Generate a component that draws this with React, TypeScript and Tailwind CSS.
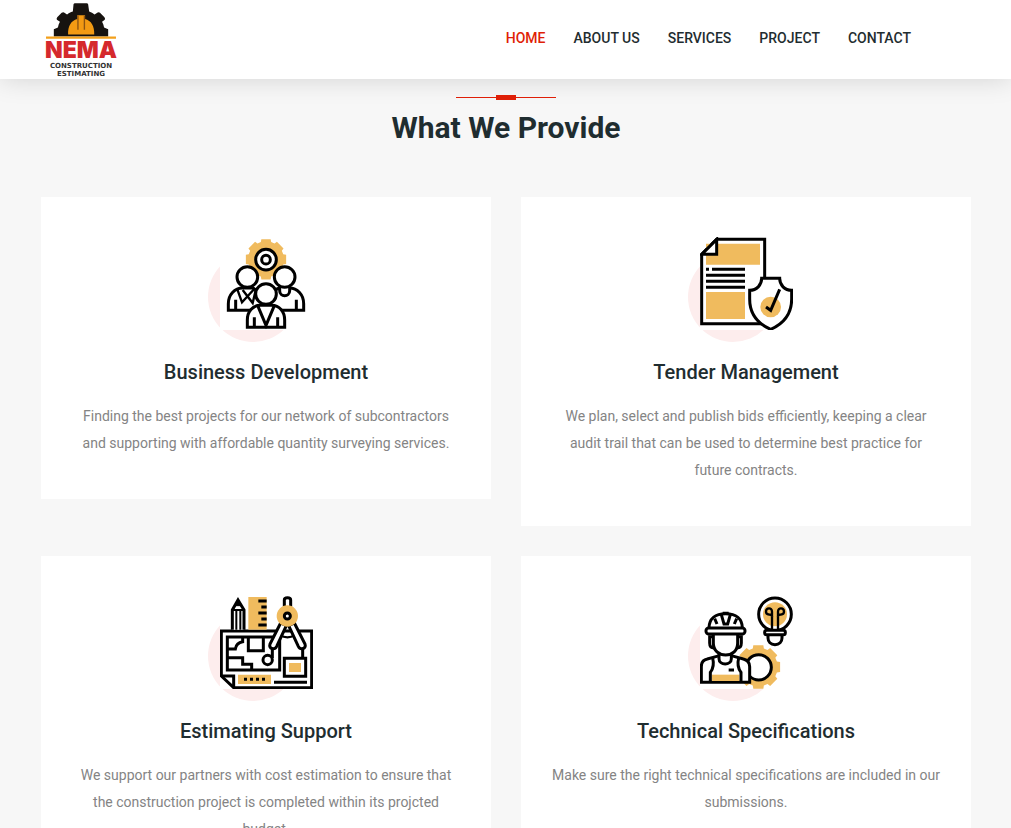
import type { ReactNode } from "react";

const GOLD = "#f0bb5e";

function gearPath(cx: number, cy: number, outer: number, inner: number, teeth: number) {
  const step = (Math.PI * 2) / teeth;
  const points: string[] = [];
  for (let i = 0; i < teeth; i++) {
    const a = i * step - Math.PI / 2;
    const corners: [number, number][] = [
      [inner, a - step * 0.37],
      [outer, a - step * 0.29],
      [outer, a + step * 0.29],
      [inner, a + step * 0.37],
    ];
    corners.forEach(([r, t]) => points.push(`${(cx + r * Math.cos(t)).toFixed(1)} ${(cy + r * Math.sin(t)).toFixed(1)}`));
  }
  return `M${points.join("L")}Z`;
}

function IconFrame({ viewBox = "60 21 279 279", children }: { viewBox?: string; children: ReactNode }) {
  return (
    <svg viewBox={viewBox} className="relative block size-full bg-white" fill="none" stroke="#000" strokeWidth="9" aria-hidden="true">
      {children}
    </svg>
  );
}

function TeamIcon() {
  return (
    <IconFrame>
      <path d={gearPath(198, 88, 62, 54, 8)} fill={GOLD} stroke="none" />
      <circle cx="198" cy="89" r="31" fill="#fff" />
      <circle cx="198" cy="89" r="13" />
      <path d="M85 241V221C85 194 104 174 128 174H158C178 182 190 200 190 241Z" fill="#fff" />
      <path d="M311 241V221C311 194 292 174 268 174H238C216 182 206 200 206 241Z" fill="#fff" />
      <path d="M107 241V209M289 241V209" />
      <path d="M112 178L126 217L162 178M128 180L158 219L167 181" strokeWidth="7" />
      <path d="M239 174V182C239 202 269 202 269 182V174" fill="#fff" />
      <circle cx="142" cy="141" r="31" fill="#fff" />
      <circle cx="254" cy="141" r="31" fill="#fff" />
      <path d="M142 292V270C142 245 158 226 181 226H215C238 226 254 245 254 270V292Z" fill="#fff" />
      <path d="M163 292V262M233 292V262M174 229L198 286L222 229" />
      <circle cx="198" cy="192" r="31" fill="#fff" />
    </IconFrame>
  );
}

function TenderIcon() {
  return (
    <IconFrame>
      <path d="M65 281V73L110 28H254V281Z" fill="#fff" />
      <path d="M78 41H240V104H78ZM78 186H195V267H78Z" fill={GOLD} stroke="none" />
      <path d="M65 73L110 28V73Z" fill="#fff" />
      <path d="M78 118H87M96 118H195M78 136H195M78 154H195M78 172H195" />
      <path d="M245 145H299C299 165 314 181 335 181V207C335 248 313 280 272 298C231 280 209 248 209 207V181C230 181 245 165 245 145Z" fill="#fff" />
      <circle cx="272" cy="231" r="31" fill={GOLD} stroke="none" />
      <path d="M258 231L272 241L299 178" />
    </IconFrame>
  );
}

function EstimatingIcon() {
  return (
    <IconFrame viewBox="60 19 279 279">
      <path d="M64 124H335V294H101L64 259Z" fill="#fff" />
      <path d="M97 120V61L114 31L132 61V120" fill="#fff" />
      <path d="M97 61H132M109 62V120M121 62V120" strokeWidth="6" />
      <path d="M105 48L114 31L123 48Z" fill="#000" strokeWidth="3" />
      <path d="M145 22H200V120H145Z" fill={GOLD} stroke="none" />
      <path d="M175 34H200M184 52H200M175 70H200M184 88H200M175 106H200" />
      <path d="M82 142H239V241H82Z" />
      <path d="M82 178H106C108 164 114 158 128 156V144M145 142V183H190V142M82 204H128V224H155V241" />
      <path d="M217 162V205M308 162V206" />
      <circle cx="203" cy="211" r="14" fill="#fff" />
      <path d="M64 259H101V294" />
      <path d="M114 255H213V283H114Z" fill={GOLD} stroke="none" />
      <path d="M132 269H196" strokeDasharray="9 9" />
      <path d="M222 278H321" />
      <path d="M253 206H317V260H253Z" fill="#fff" />
      <path d="M267 220H303V247H267Z" fill={GOLD} stroke="none" />
      <path d="M253 51V31C253 22 272 22 272 31V51" fill="#fff" />
      <path d="M240 137Q262 149 285 137" strokeWidth="7" />
      <path d="M242 100L210 163C205 178 224 182 230 170L259 108ZM283 100L315 163C320 178 301 182 295 170L266 108Z" fill="#fff" />
      <circle cx="262" cy="79" r="32" fill={GOLD} stroke="none" />
      <circle cx="262" cy="79" r="9" fill="#fff" />
    </IconFrame>
  );
}

function EngineerIcon() {
  return (
    <IconFrame viewBox="60 19 279 279">
      <path d={gearPath(235, 232, 67, 58, 8)} fill={GOLD} stroke="none" />
      <circle cx="236" cy="233" r="38" fill="#fff" />
      <path d="M64 278V231C64 218 72 210 82 208L118 198H154L190 208C202 211 209 219 209 231V278Z" fill="#fff" />
      <path d="M96 255H178V274H96Z" fill={GOLD} stroke="none" />
      <path d="M91 278V248C101 235 102 221 98 205M183 278V248C173 235 172 221 176 205" />
      <path d="M117 193V207C117 228 154 228 154 207V193" fill="#fff" />
      <path d="M146 241H162" />
      <path d="M100 134V160C100 183 117 196 137 196S173 183 173 160V134" fill="#fff" />
      <path d="M100 141H89V160C89 170 94 175 102 175M173 141H184V160C184 170 179 175 171 175" />
      <path d="M87 115C87 87 106 72 137 72S187 87 187 115" fill="#fff" />
      <path d="M124 75L132 103H143L151 75M104 87L111 103M170 87L163 103M128 71H146" />
      <rect x="78" y="115" width="117" height="18" rx="8" fill="#fff" />
      <circle cx="285" cy="74" r="49" fill="#fff" />
      <circle cx="285" cy="74" r="36" fill={GOLD} stroke="none" />
      <path d="M276 118V80M294 118V80" strokeWidth="7" />
      <path d="M276 81V66C276 52 258 54 258 66C258 75 270 76 276 75M294 81V66C294 52 312 54 312 66C312 75 300 76 294 75" strokeWidth="7" />
      <path d="M264 135V145C264 156 272 165 285 165S306 156 306 145V135" fill="#fff" />
      <rect x="254" y="122" width="62" height="13" rx="6" fill="#fff" />
    </IconFrame>
  );
}

const navItems = ["Home", "About us", "Services", "Project", "Contact"];

const services = [
  {
    title: "Business Development",
    text: "Finding the best projects for our network of subcontractors and supporting with affordable quantity surveying services.",
    icon: <TeamIcon />,
  },
  {
    title: "Tender Management",
    text: "We plan, select and publish bids efficiently, keeping a clear audit trail that can be used to determine best practice for future contracts.",
    icon: <TenderIcon />,
  },
  {
    title: "Estimating Support",
    text: "We support our partners with cost estimation to ensure that the construction project is completed within its projcted budget.",
    icon: <EstimatingIcon />,
  },
  {
    title: "Technical Specifications",
    text: "Make sure the right technical specifications are included in our submissions.",
    icon: <EngineerIcon />,
  },
];

function Logo() {
  return (
    <a href="#" className="flex w-20 flex-col items-center pt-[3px]" aria-label="Nema Construction Estimating">
      <svg viewBox="34 9 206 106" className="block h-9 w-[70px]" aria-hidden="true">
        <path
          d="M57 108V86L69 81C70 75 72 69 75 64L66 58Q64 55 67 51L80 38Q84 35 87 37L96 43C101 39 106 36 113 34L115 13Q116 10 119 10H154Q157 10 158 13L161 34C167 36 172 39 177 43L186 37Q190 35 193 38L206 51Q209 55 207 58L199 64C202 69 204 75 205 81L217 86V108Z"
          fill="#171310"
        />
        <path d="M99 102C98 76 108 61 126 56V45H149V56C167 61 177 76 176 102Z" fill="#f39a13" />
        <path d="M128 46V88M147 46V88" stroke="#8d5412" strokeWidth="4" />
        <path d="M34 108H240V114H34Z" fill="#f3a01b" />
      </svg>
      <span className="mt-px font-[Inter,sans-serif] text-[23px] leading-5 font-black text-[#d5292d]">NEMA</span>
      <span className="mt-0.5 text-center font-['DejaVu_Sans',sans-serif] text-[7px] leading-2 font-bold text-[#333]">
        CONSTRUCTION
        <br />
        ESTIMATING
      </span>
    </a>
  );
}

export default function App() {
  return (
    <div className="min-h-screen bg-[#f7f7f7] font-[Roboto,sans-serif] text-[#1f2d30]">
      <header className="relative bg-white shadow-[0_0_25px_rgba(0,0,0,0.15)]">
        <div className="mx-auto flex h-[79px] max-w-[959px] items-start justify-between pr-[74px] pl-[15px]">
          <Logo />
          <nav className="flex gap-7 pt-7 text-sm font-medium uppercase">
            {navItems.map((item, i) => (
              <a key={item} href="#" className={i === 0 ? "text-[#df1f07]" : "text-[#1f2d30]"}>
                {item}
              </a>
            ))}
          </nav>
        </div>
      </header>

      <main className="mx-auto max-w-[959px] pt-4 pr-[14px] pb-8 pl-[15px]">
        <div className="relative flex flex-col items-center">
          <div className="flex w-[100px] items-center" aria-hidden="true">
            <span className="h-px flex-1 bg-[#df1f07]" />
            <span className="h-[5px] w-5 bg-[#df1f07]" />
            <span className="h-px flex-1 bg-[#df1f07]" />
          </div>
          <h1 className="mt-2 text-[30px] leading-10 font-bold">What We Provide</h1>
        </div>

        <div className="mt-[49px] grid grid-cols-1 items-start gap-[30px] sm:grid-cols-2">
          {services.map((service) => (
            <article key={service.title} className="flex flex-col items-center bg-white px-[30px] pt-10 pb-[42px] text-center">
              <div className="relative size-[93px]">
                <span className="absolute top-[15px] -left-3 size-[90px] rounded-full bg-[#fdeded]" />
                {service.icon}
              </div>
              <h2 className="mt-7 text-xl leading-7 font-medium">{service.title}</h2>
              <p className="mt-[17px] text-sm leading-[27px] text-[#848484]">{service.text}</p>
            </article>
          ))}
        </div>
      </main>
    </div>
  );
}
